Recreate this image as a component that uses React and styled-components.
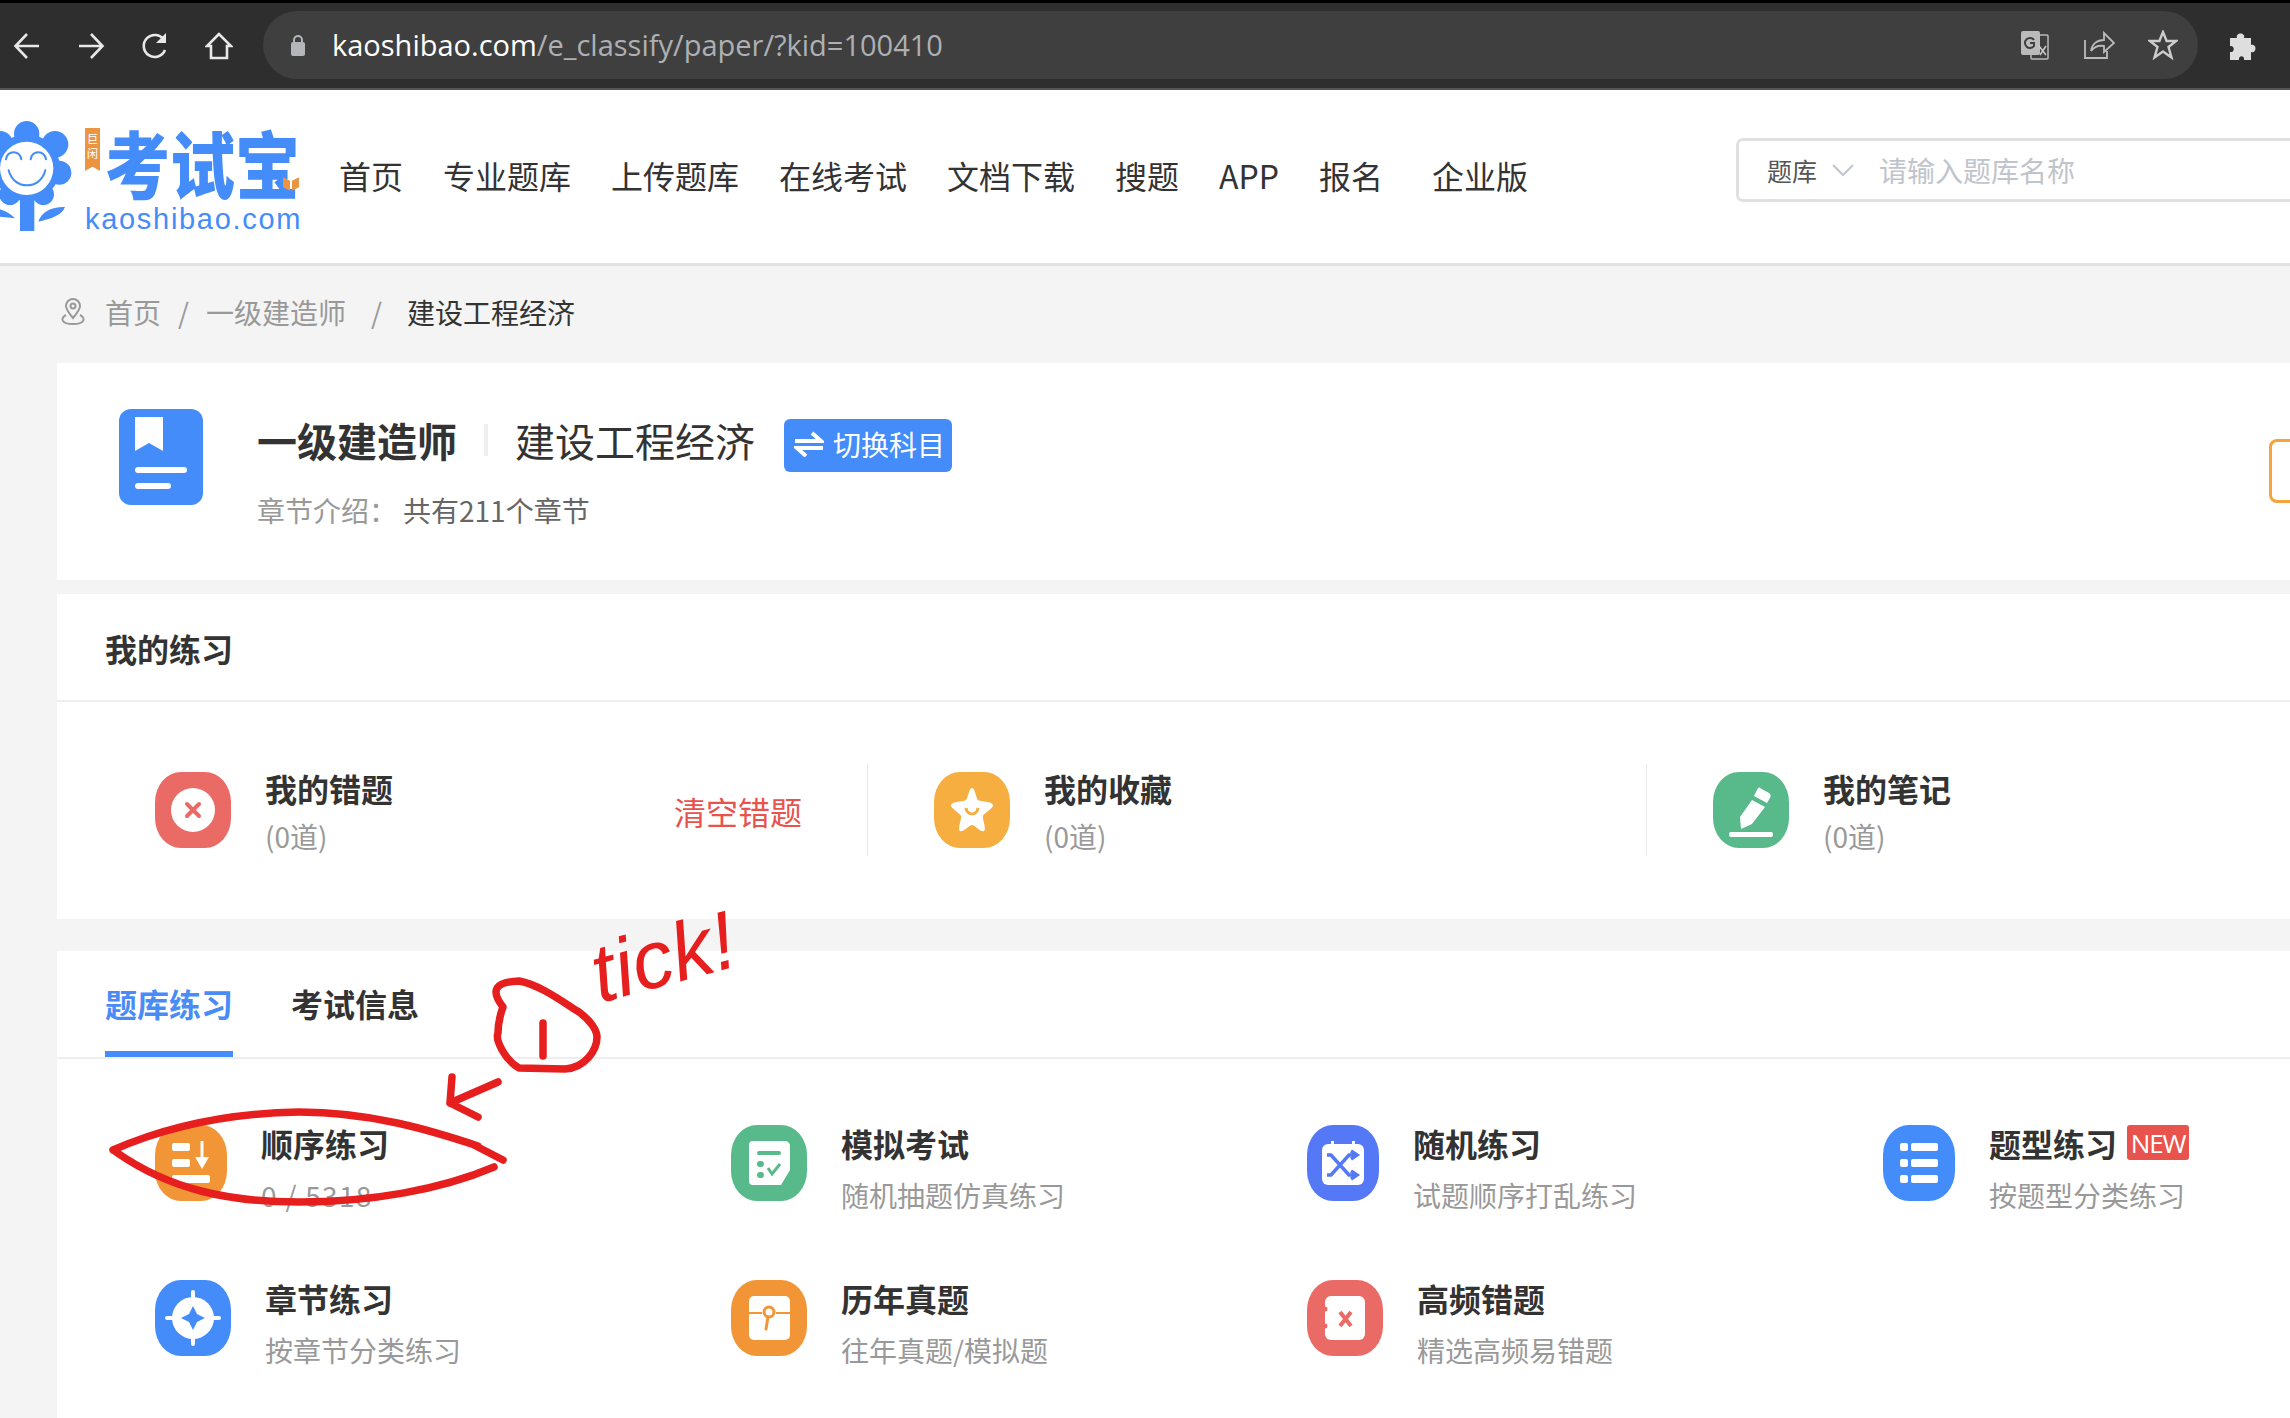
import styled, { createGlobalStyle } from 'styled-components';

const GlobalStyle = createGlobalStyle`
  html, body { margin: 0; padding: 0; background: #f4f4f4; }
  body { font-family: "Noto Sans CJK SC", "Liberation Sans", sans-serif; }
`;

const CJK = `"Noto Sans CJK SC", "Liberation Sans", sans-serif`;
const BLUE = '#438cf9';

const Page = styled.div`
  position: relative;
  width: 2290px;
  height: 1418px;
  overflow: hidden;
  background: #f4f4f4;
`;

/* browser chrome */
const Chrome = styled.div`
  height: 85px;
  box-sizing: content-box;
  border-top: 3px solid #000;
  border-bottom: 2px solid #555;
  background: #2e2e2e;
  display: flex;
  align-items: center;
  padding-left: 13px;
`;
const NavIcons = styled.div`
  display: flex;
  gap: 36px;
  width: 250px;
  flex-shrink: 0;
`;
const Omnibox = styled.div`
  width: 1935px;
  height: 68px;
  margin-top: -2px;
  flex-shrink: 0;
  border-radius: 34px;
  background: #3f3f3f;
  display: flex;
  align-items: center;
  padding-left: 27px;
  box-sizing: border-box;
`;
const Url = styled.div`
  margin-left: 26px;
  font: 29px "Open Sans", sans-serif;
  color: #aeb0b3;
  white-space: nowrap;
  b { font-weight: 400; color: #fff; }
`;
const OmniActions = styled.div`
  margin-left: auto;
  margin-right: 20px;
  display: flex;
  gap: 33px;
`;
const Puzzle = styled.div`
  margin-left: 30px;
  display: flex;
`;

/* site header */
const Header = styled.header`
  height: 173px;
  background: #fff;
  border-bottom: 3px solid #e2e2e2;
  display: flex;
  align-items: flex-start;
  overflow: hidden;
`;
const Logo = styled.div`
  width: 300px;
  height: 120px;
  margin-top: 21px;
  flex-shrink: 0;
  display: flex;
`;
const Flower = styled.svg`
  flex-shrink: 0;
`;
const LogoRight = styled.div`
  margin-left: 13px;
  padding-top: 17px;
  flex-shrink: 0;
`;
const LogoTop = styled.div`
  display: flex;
  height: 61px;
`;
const Ribbon = styled.div`
  width: 15px;
  height: 43px;
  padding-top: 3px;
  box-sizing: border-box;
  background: #ec9540;
  color: #fff;
  font-size: 11px;
  line-height: 15px;
  text-align: center;
  clip-path: polygon(0 0, 100% 0, 100% 100%, 50% 90%, 0 100%);
`;
const LogoName = styled.div`
  position: relative;
  height: 60px;
  margin-left: 5px;
  font: 900 65px/60px ${CJK};
  color: ${BLUE};
  white-space: nowrap;
  transform: scaleY(1.12);
  transform-origin: 0 0;
`;
const MiniBook = styled.svg`
  position: absolute;
  right: 1px;
  bottom: 4px;
`;
const LogoDomain = styled.div`
  font: 29px/26px "Liberation Sans", sans-serif;
  letter-spacing: 1.7px;
  color: ${BLUE};
  margin-top: 17px;
`;
const Nav = styled.nav`
  display: flex;
  gap: 40px;
  margin-left: 39px;
  margin-top: 61px;
  white-space: nowrap;
  flex-shrink: 0;
`;
const NavLink = styled.a`
  font-size: 32px;
  line-height: 48px;
  color: #333;
  margin-left: ${(p) => (p.$extra ? '9px' : '0')};
`;
const SearchBox = styled.div`
  flex-shrink: 0;
  margin-left: 208px;
  margin-top: 48px;
  width: 700px;
  height: 64px;
  box-sizing: border-box;
  border: 3px solid #e0e0e0;
  border-radius: 7px;
  display: flex;
  align-items: center;
  padding-left: 28px;
`;
const SearchType = styled.span`
  font-size: 25px;
  color: #555;
`;
const SearchHint = styled.span`
  margin-left: 24px;
  font-size: 28px;
  color: #c0c4cc;
`;

/* breadcrumb */
const Crumbs = styled.div`
  height: 97px;
  box-sizing: border-box;
  padding: 0 0 6px 60px;
  display: flex;
  align-items: center;
  font-size: 28px;
  color: #999;
`;
const CrumbSep = styled.span`
  font-size: 28px;
  color: #999;
  margin: 0 ${(p) => p.$space}px;
`;
const CrumbNow = styled.span`
  color: #333;
`;

/* cards */
const Card = styled.section`
  margin-left: 57px;
  background: #fff;
`;
const SubjectCard = styled(Card)`
  position: relative;
  height: 217px;
  margin-bottom: 14px;
  display: flex;
  padding: 46px 0 0 62px;
  box-sizing: border-box;
  gap: 54px;
`;
const SubjectInfo = styled.div`
  padding-top: 3px;
`;
const SubjectTitle = styled.div`
  display: flex;
  align-items: center;
  height: 56px;
  font-size: 40px;
  color: #333;
`;
const TitleStrong = styled.b`
  font-weight: 700;
`;
const TitleBar = styled.i`
  width: 4px;
  height: 32px;
  background: #eee;
  margin: 0 27px 0 27px;
`;
const SwitchBtn = styled.button`
  margin-left: 29px;
  margin-top: 10px;
  width: 168px;
  height: 53px;
  padding: 0 0 3px 10px;
  border: 0;
  border-radius: 6px;
  background: ${BLUE};
  color: #fff;
  font: 28px ${CJK};
  display: flex;
  align-items: center;
  gap: 9px;
`;
const SubjectDesc = styled.div`
  margin-top: 22px;
  font-size: 28px;
  line-height: 40px;
  color: #999;
  span { color: #666; margin-left: 6px; }
`;
const OrangeEdge = styled.div`
  position: absolute;
  left: 2212px;
  top: 76px;
  width: 60px;
  height: 64px;
  box-sizing: border-box;
  border: 3px solid #f5a33b;
  border-radius: 8px;
`;

const PracticeCard = styled(Card)`
  height: 325px;
  margin-bottom: 32px;
`;
const SectionHead = styled.h2`
  margin: 0;
  height: 108px;
  box-sizing: border-box;
  padding: 33px 0 0 48px;
  border-bottom: 2px solid #eee;
  font-size: 32px;
  line-height: 42px;
  font-weight: 700;
  color: #333;
`;
const StatRow = styled.div`
  display: flex;
  padding: 62px 0 0 32px;
`;
const StatCell = styled.div`
  width: 779px;
  height: 92px;
  flex-shrink: 0;
  box-sizing: border-box;
  padding: 8px 65px 0 66px;
  display: flex;
  gap: 34px;
  border-right: 1px solid #e8e8e8;
  &:last-child { border-right: 0; }
`;
const StatTitle = styled.div`
  margin-top: -1px;
  font-size: 32px;
  line-height: 34px;
  font-weight: 700;
  color: #333;
`;
const StatCount = styled.div`
  margin-top: 14px;
  font-size: 28px;
  line-height: 34px;
  color: #999;
`;
const ClearLink = styled.a`
  margin-left: auto;
  margin-top: 19px;
  font-size: 32px;
  line-height: 40px;
  color: #e8534d;
`;

const ExerciseCard = styled(Card)`
  height: 468px;
`;
const Tabs = styled.div`
  display: flex;
  gap: 58px;
  padding-left: 48px;
  border-bottom: 2px solid #eee;
  height: 106px;
`;
const Tab = styled.div`
  height: 106px;
  box-sizing: border-box;
  padding-top: 31px;
  font-size: 32px;
  line-height: 42px;
  font-weight: 700;
  color: ${(p) => (p.$on ? '#4a8cf7' : '#333')};
  border-bottom: 6px solid ${(p) => (p.$on ? BLUE : 'transparent')};
`;
const ExerciseGrid = styled.div`
  display: grid;
  grid-template-columns: repeat(4, 576px);
  grid-auto-rows: 155px;
  padding: 66px 0 0 98px;
`;
const Exercise = styled.div`
  display: flex;
  gap: 34px;
`;
const ExerciseTitle = styled.div`
  display: flex;
  margin-top: -3px;
  font-size: 32px;
  line-height: 42px;
  font-weight: 700;
  color: #333;
`;
const ExerciseDesc = styled.div`
  margin-top: 10px;
  font-size: 28px;
  line-height: 42px;
  color: #999;
`;
const ProgressDesc = styled(ExerciseDesc)`
  letter-spacing: 1.3px;
`;
const NewBadge = styled.span`
  margin: 3px 0 0 10px;
  width: 62px;
  height: 35px;
  border-radius: 3px;
  background: #e8534d;
  color: #fff;
  font: 400 26px/36px "Open Sans", sans-serif;
  letter-spacing: -1.2px;
  text-align: center;
`;
const IconTile = styled.div`
  width: ${(p) => p.$w || 76}px;
  height: 76px;
  flex-shrink: 0;
  border-radius: 26px / 30px;
  background: ${(p) => p.$bg};
  display: flex;
  align-items: center;
  justify-content: center;
`;

/* the red pen marks on top of the screenshot */
const Scribble = styled.svg`
  position: absolute;
  left: 0;
  top: 0;
  pointer-events: none;
`;
const TickNote = styled.div`
  position: absolute;
  left: 590px;
  top: 912px;
  font: italic 400 82px/90px "Liberation Sans", sans-serif;
  color: #e61e1e;
  transform: rotate(-15deg);
`;

const Ico = ({ w = 76, children }) => (
  <svg width={w} height="76" viewBox={`0 0 ${w} 76`}>{children}</svg>
);

const chromeIcon = { fill: 'none', stroke: '#e8e8e8', strokeWidth: 2.6 };

const App = () => (
  <Page>
    <GlobalStyle />
    <Chrome>
      <NavIcons>
        <svg width="28" height="28" viewBox="0 0 28 28" {...chromeIcon}>
          <path d="M26 14H3M14 2 2.5 14 14 26" />
        </svg>
        <svg width="28" height="28" viewBox="0 0 28 28" {...chromeIcon}>
          <path d="M2 14h23M14 2l11.500 12L14 26" />
        </svg>
        <svg width="28" height="28" viewBox="0 0 28 28" {...chromeIcon}>
          <path d="M24 18a11 11 0 1 1-1-10" />
          <path d="M25 1v10H15z" fill="#e8e8e8" stroke="none" />
        </svg>
        <svg width="28" height="28" viewBox="0 0 28 28" {...chromeIcon}>
          <path d="M14 2 2 14h4v12h16V14h4z" />
        </svg>
      </NavIcons>
      <Omnibox>
        <svg width="16" height="22" viewBox="0 0 16 22">
          <path d="M4 9V6a4 4 0 0 1 8 0v3" fill="none" stroke="#b4b6b9" strokeWidth="2" />
          <rect x="1" y="8" width="14" height="14" rx="2" fill="#b4b6b9" />
        </svg>
        <Url><b>kaoshibao.com</b>/e_classify/paper/?kid=100410</Url>
        <OmniActions>
          <svg width="30" height="30" viewBox="0 0 30 30">
            <rect x="11" y="5" width="17" height="24" rx="1" fill="none" stroke="#bbb" strokeWidth="1.5" />
            <rect x="1" y="1" width="19" height="24" rx="2" fill="#bbb" />
            <path d="M14 10a5 5 0 1 0 0 6v-3h-4" fill="none" stroke="#3f3f3f" strokeWidth="2" />
            <path d="M19 16l7 9M26 16l-6 9" stroke="#ccc" strokeWidth="1.5" />
          </svg>
          <svg width="32" height="30" viewBox="0 0 32 30" fill="none" stroke="#bbb" strokeWidth="1.8">
            <path d="M2 10v18h22v-7" />
            <path d="M8 21c1-7 6-11 13-11V3l10 10-10 9v-6c-6-1-10 1-13 5z" />
          </svg>
          <svg width="30" height="30" viewBox="0 0 30 30" fill="none" stroke="#ccc" strokeWidth="2.4">
            <path d="M15 2l3.600 9H28l-7.500 6 3 10.500L15 21.500 6.500 27.500l3-10.500L2 11h9.400z" />
          </svg>
        </OmniActions>
      </Omnibox>
      <Puzzle>
        <svg width="30" height="30" viewBox="0 0 30 30">
          <path d="M2 7h7c-2-6 9-6 7 0h7v7c6-2 6 9 0 7v8h-7c1-5-6-5-5 0H2v-8c5 1 5-7 0-6z" fill="#dedede" />
        </svg>
      </Puzzle>
    </Chrome>

    <Header>
      <Logo>
        <Flower width="72" height="120" viewBox="0 0 216 360">
          <g fill={BLUE}>
            <circle cx="80" cy="68" r="38" />
            <circle cx="165" cy="100" r="40" />
            <circle cx="178" cy="185" r="36" />
            <circle cx="130" cy="250" r="32" />
            <circle cx="0" cy="100" r="40" />
            <circle cx="-18" cy="185" r="36" />
            <circle cx="30" cy="250" r="32" />
            <circle cx="80" cy="170" r="100" />
            <rect x="60" y="250" width="43" height="110" />
            <path d="M115 332c10-30 40-45 80-44-10 25-40 35-80 44zM45 322C30 305 10 295-20 290v25z" />
          </g>
          <circle cx="80" cy="172" r="80" fill="#fff" />
          <g fill="none" stroke={BLUE} strokeWidth="6" strokeLinecap="round">
            <path d="M18 145c5-28 40-28 46 0M92 145c5-28 40-28 46 0" />
            <path d="M26 178c15 60 95 60 110 0" />
          </g>
        </Flower>
        <LogoRight>
          <LogoTop>
            <Ribbon>巨闲</Ribbon>
            <LogoName>
              考试宝
              <MiniBook width="16" height="12" viewBox="0 0 16 12">
                <path d="M0 0l7 3v9l-7-3zM16 0 9 3v9l7-3z" fill="#ec9540" />
              </MiniBook>
            </LogoName>
          </LogoTop>
          <LogoDomain>kaoshibao.com</LogoDomain>
        </LogoRight>
      </Logo>
      <Nav>
        {['首页', '专业题库', '上传题库', '在线考试', '文档下载', '搜题', 'APP', '报名'].map((t) => (
          <NavLink key={t}>{t}</NavLink>
        ))}
        <NavLink $extra>企业版</NavLink>
      </Nav>
      <SearchBox>
        <SearchType>题库</SearchType>
        <svg width="24" height="14" viewBox="0 0 24 14" style={{ marginLeft: 14 }}>
          <path d="M2 2l10 10L22 2" fill="none" stroke="#c0c4cc" strokeWidth="2" />
        </svg>
        <SearchHint>请输入题库名称</SearchHint>
      </SearchBox>
    </Header>

    <Crumbs>
      <svg width="26" height="28" viewBox="0 0 26 28" fill="none" stroke="#999" strokeWidth="2" style={{ marginRight: 19 }}>
        <path d="M13 20C8 14 6 11 6 8a7 7 0 0 1 14 0c0 3-2 6-7 12z" />
        <circle cx="13" cy="8" r="2.500" />
        <path d="M6 17c-6 3-5 9 7 9s13-6 7-9" />
      </svg>
      首页
      <CrumbSep $space={17}>/</CrumbSep>
      一级建造师
      <CrumbSep $space={25}>/</CrumbSep>
      <CrumbNow>建设工程经济</CrumbNow>
    </Crumbs>

    <SubjectCard>
      <svg width="84" height="96" viewBox="0 0 84 96">
        <rect width="84" height="96" rx="12" fill={BLUE} />
        <path d="M16 8h28v34L30 34l-14 8z" fill="#fff" />
        <rect x="16" y="58" width="52" height="6" rx="3" fill="#fff" />
        <rect x="16" y="74" width="36" height="6" rx="3" fill="#fff" />
      </svg>
      <SubjectInfo>
        <SubjectTitle>
          <TitleStrong>一级建造师</TitleStrong>
          <TitleBar />
          建设工程经济
          <SwitchBtn>
            <svg width="30" height="26" viewBox="0 0 30 26" fill="none" stroke="#fff" strokeWidth="4">
              <path d="M1 10h26L18 2M29 17H3l9 8" />
            </svg>
            切换科目
          </SwitchBtn>
        </SubjectTitle>
        <SubjectDesc>章节介绍：<span>共有211个章节</span></SubjectDesc>
      </SubjectInfo>
      <OrangeEdge />
    </SubjectCard>

    <PracticeCard>
      <SectionHead>我的练习</SectionHead>
      <StatRow>
        <StatCell>
          <IconTile $bg="#ea6a66">
            <Ico>
              <circle cx="38" cy="38" r="22" fill="#fff" />
              <path d="M32 32l12 12M44 32 32 44" stroke="#ea6a66" strokeWidth="4" strokeLinecap="round" />
            </Ico>
          </IconTile>
          <div>
            <StatTitle>我的错题</StatTitle>
            <StatCount>(0道)</StatCount>
          </div>
          <ClearLink>清空错题</ClearLink>
        </StatCell>
        <StatCell>
          <IconTile $bg="#f5ae3f">
            <Ico>
              <path d="M38 16c3 0 4 10 6 12 3 2 14 1 15 5 1 3-9 8-10 11-1 3 4 13 1 15-3 2-9-6-12-6s-9 8-12 6c-3-2 2-12 1-15-1-3-11-8-10-11 1-4 12-3 15-5 2-2 3-12 6-12z" fill="#fff" />
              <path d="M32 36c1 8 11 8 12 0" fill="none" stroke="#f5ae3f" strokeWidth="3" />
            </Ico>
          </IconTile>
          <div>
            <StatTitle>我的收藏</StatTitle>
            <StatCount>(0道)</StatCount>
          </div>
        </StatCell>
        <StatCell>
          <IconTile $bg="#58b98a">
            <Ico>
              <path d="M47 16l9 5c2 1 2 3 1 5l-3 5-13-7 3-6c1-2 2-3 3-2zM39 28l13 7-13 17-11 5-1-12z" fill="#fff" />
              <rect x="16" y="60" width="44" height="5" rx="2" fill="#fff" />
            </Ico>
          </IconTile>
          <div>
            <StatTitle>我的笔记</StatTitle>
            <StatCount>(0道)</StatCount>
          </div>
        </StatCell>
      </StatRow>
    </PracticeCard>

    <ExerciseCard>
      <Tabs>
        <Tab $on>题库练习</Tab>
        <Tab>考试信息</Tab>
      </Tabs>
      <ExerciseGrid>
        <Exercise>
          <IconTile $bg="#f19536" $w={72}>
            <Ico w={72}>
              <rect x="17" y="18" width="18" height="8" rx="2" fill="#fff" />
              <rect x="17" y="34" width="18" height="8" rx="2" fill="#fff" />
              <rect x="17" y="50" width="38" height="8" rx="2" fill="#fff" />
              <path d="M47 16v20" stroke="#fff" strokeWidth="3" />
              <path d="M40 32h14l-7 12z" fill="#fff" />
            </Ico>
          </IconTile>
          <div>
            <ExerciseTitle>顺序练习</ExerciseTitle>
            <ProgressDesc>0 / 5318</ProgressDesc>
          </div>
        </Exercise>
        <Exercise>
          <IconTile $bg="#58b98a">
            <Ico>
              <path d="M22 16h32a5 5 0 0 1 5 5v24l-9 15H22a4 4 0 0 1-4-4V20a4 4 0 0 1 4-4z" fill="#fff" />
              <rect x="26" y="26" width="24" height="4" rx="2" fill="#58b98a" />
              <rect x="26" y="36" width="7" height="6" rx="3" fill="#58b98a" />
              <rect x="26" y="47" width="7" height="6" rx="3" fill="#58b98a" />
              <path d="M37 43l4 6 8-10" fill="none" stroke="#58b98a" strokeWidth="3" />
            </Ico>
          </IconTile>
          <div>
            <ExerciseTitle>模拟考试</ExerciseTitle>
            <ExerciseDesc>随机抽题仿真练习</ExerciseDesc>
          </div>
        </Exercise>
        <Exercise>
          <IconTile $bg="#5578f6" $w={72}>
            <Ico w={72}>
              <rect x="15" y="19" width="42" height="41" rx="6" fill="#fff" />
              <rect x="24" y="16" width="3" height="7" fill="#fff" />
              <rect x="45" y="16" width="3" height="7" fill="#fff" />
              <g fill="none" stroke="#5578f6" strokeWidth="3.500">
                <path d="M20 30h4l18 20h5M20 50h4l18-20h5" />
                <path d="M44 26l6 4-6 4M44 46l6 4-6 4" />
              </g>
            </Ico>
          </IconTile>
          <div>
            <ExerciseTitle>随机练习</ExerciseTitle>
            <ExerciseDesc>试题顺序打乱练习</ExerciseDesc>
          </div>
        </Exercise>
        <Exercise>
          <IconTile $bg={BLUE} $w={72}>
            <Ico w={72}>
              {[18, 34, 50].map((y) => (
                <g key={y} fill="#fff">
                  <rect x="17" y={y} width="8" height="8" rx="2" />
                  <rect x="28" y={y} width="27" height="8" rx="2" />
                </g>
              ))}
            </Ico>
          </IconTile>
          <div>
            <ExerciseTitle>题型练习<NewBadge>NEW</NewBadge></ExerciseTitle>
            <ExerciseDesc>按题型分类练习</ExerciseDesc>
          </div>
        </Exercise>
        <Exercise>
          <IconTile $bg={BLUE}>
            <Ico>
              <circle cx="38" cy="38" r="21" fill="#fff" />
              <path d="M38 12v52M12 38h52" stroke="#fff" strokeWidth="4" strokeLinecap="round" />
              <path d="M38 26l4 8 8 4-8 4-4 8-4-8-8-4 8-4z" fill={BLUE} />
            </Ico>
          </IconTile>
          <div>
            <ExerciseTitle>章节练习</ExerciseTitle>
            <ExerciseDesc>按章节分类练习</ExerciseDesc>
          </div>
        </Exercise>
        <Exercise>
          <IconTile $bg="#f19536">
            <Ico>
              <rect x="18" y="16" width="41" height="44" rx="5" fill="#fff" />
              <path d="M18 33h13M45 33h14" stroke="#f19536" strokeWidth="2" />
              <circle cx="38" cy="32" r="5" fill="none" stroke="#f19536" strokeWidth="3" />
              <path d="M37 37l-2 12" stroke="#f19536" strokeWidth="3" strokeLinecap="round" />
            </Ico>
          </IconTile>
          <div>
            <ExerciseTitle>历年真题</ExerciseTitle>
            <ExerciseDesc>往年真题/模拟题</ExerciseDesc>
          </div>
        </Exercise>
        <Exercise>
          <IconTile $bg="#ea6a66">
            <Ico>
              <rect x="18" y="16" width="40" height="44" rx="6" fill="#fff" />
              <circle cx="18" cy="29" r="2.500" fill="#ea6a66" />
              <circle cx="18" cy="46" r="2.500" fill="#ea6a66" />
              <path d="M33 32l11 14M44 32 33 46" stroke="#ea6a66" strokeWidth="4" />
            </Ico>
          </IconTile>
          <div>
            <ExerciseTitle>高频错题</ExerciseTitle>
            <ExerciseDesc>精选高频易错题</ExerciseDesc>
          </div>
        </Exercise>
      </ExerciseGrid>
    </ExerciseCard>

    <Scribble width="2290" height="1418" viewBox="0 0 2290 1418" fill="none" stroke="#e61e1e" strokeWidth="7.500" strokeLinecap="round" strokeLinejoin="round">
      <path d="M113 1150C170 1125 230 1113 299 1112 370 1112 430 1130 478 1146M474 1145 503 1160" />
      <path d="M116 1152C170 1190 230 1202 299 1202 370 1202 440 1190 494 1167" />
      <path d="M503 1007C490 990 495 982 519 981 540 985 560 1000 579 1012 590 1020 597 1030 597 1037 597 1050 585 1068 565 1069L519 1068C505 1060 495 1040 498 1033 498 1020 502 1010 503 1007z" />
      <path d="M543 1023V1056" />
      <path d="M498 1082 450 1103 452 1077M450 1103 478 1117" />
    </Scribble>
    <TickNote>tick!</TickNote>
  </Page>
);

export default App;
